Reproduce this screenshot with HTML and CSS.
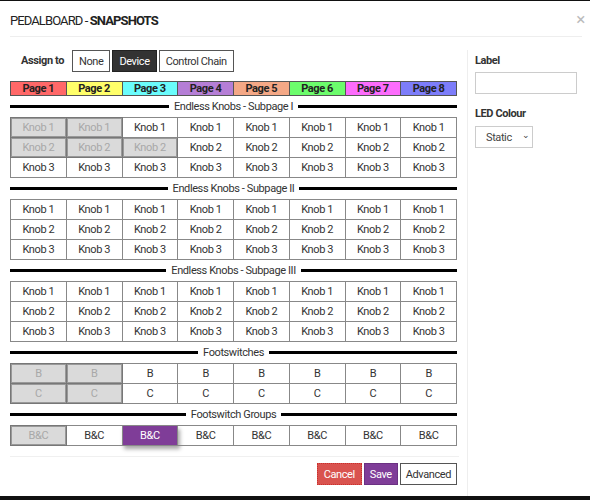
FILE: index.html
```html
<!DOCTYPE html>
<html>
<head>
    <meta charset="utf-8" />
    <title>Pedalboard - Snapshots</title>
    <link rel="stylesheet" href="styles.css">
</head>
<body>
    <div class="modal">
        <div class="modal-head">
            <h2>PEDALBOARD - <b>SNAPSHOTS</b></h2>
            <span class="close">&times;</span>
        </div>
        <div class="modal-body">
            <div class="main">
                <div class="assign">
                    <span class="assign-label">Assign to</span>
                    <button class="btn">None</button>
                    <button class="btn dark">Device</button>
                    <button class="btn">Control Chain</button>
                </div>

                <ul class="pages">
                    <li class="p1">Page 1</li>
                    <li class="p2">Page 2</li>
                    <li class="p3">Page 3</li>
                    <li class="p4">Page 4</li>
                    <li class="p5">Page 5</li>
                    <li class="p6">Page 6</li>
                    <li class="p7">Page 7</li>
                    <li class="p8">Page 8</li>
                </ul>

                <div class="section"><span>Endless Knobs - Subpage I</span></div>
                <table class="grid">
                    <tr><td class="off">Knob 1</td><td class="off">Knob 1</td><td>Knob 1</td><td>Knob 1</td><td>Knob 1</td><td>Knob 1</td><td>Knob 1</td><td>Knob 1</td></tr>
                    <tr><td class="off">Knob 2</td><td class="off">Knob 2</td><td class="off">Knob 2</td><td>Knob 2</td><td>Knob 2</td><td>Knob 2</td><td>Knob 2</td><td>Knob 2</td></tr>
                    <tr><td>Knob 3</td><td>Knob 3</td><td>Knob 3</td><td>Knob 3</td><td>Knob 3</td><td>Knob 3</td><td>Knob 3</td><td>Knob 3</td></tr>
                </table>

                <div class="section"><span>Endless Knobs - Subpage II</span></div>
                <table class="grid">
                    <tr><td>Knob 1</td><td>Knob 1</td><td>Knob 1</td><td>Knob 1</td><td>Knob 1</td><td>Knob 1</td><td>Knob 1</td><td>Knob 1</td></tr>
                    <tr><td>Knob 2</td><td>Knob 2</td><td>Knob 2</td><td>Knob 2</td><td>Knob 2</td><td>Knob 2</td><td>Knob 2</td><td>Knob 2</td></tr>
                    <tr><td>Knob 3</td><td>Knob 3</td><td>Knob 3</td><td>Knob 3</td><td>Knob 3</td><td>Knob 3</td><td>Knob 3</td><td>Knob 3</td></tr>
                </table>

                <div class="section"><span>Endless Knobs - Subpage III</span></div>
                <table class="grid">
                    <tr><td>Knob 1</td><td>Knob 1</td><td>Knob 1</td><td>Knob 1</td><td>Knob 1</td><td>Knob 1</td><td>Knob 1</td><td>Knob 1</td></tr>
                    <tr><td>Knob 2</td><td>Knob 2</td><td>Knob 2</td><td>Knob 2</td><td>Knob 2</td><td>Knob 2</td><td>Knob 2</td><td>Knob 2</td></tr>
                    <tr><td>Knob 3</td><td>Knob 3</td><td>Knob 3</td><td>Knob 3</td><td>Knob 3</td><td>Knob 3</td><td>Knob 3</td><td>Knob 3</td></tr>
                </table>

                <div class="section"><span>Footswitches</span></div>
                <table class="grid">
                    <tr><td class="off">B</td><td class="off">B</td><td>B</td><td>B</td><td>B</td><td>B</td><td>B</td><td>B</td></tr>
                    <tr><td class="off">C</td><td class="off">C</td><td>C</td><td>C</td><td>C</td><td>C</td><td>C</td><td>C</td></tr>
                </table>

                <div class="section"><span>Footswitch Groups</span></div>
                <table class="grid">
                    <tr><td class="off">B&amp;C</td><td>B&amp;C</td><td class="on">B&amp;C</td><td>B&amp;C</td><td>B&amp;C</td><td>B&amp;C</td><td>B&amp;C</td><td>B&amp;C</td></tr>
                </table>

                <div class="footer">
                    <button class="btn red">Cancel</button>
                    <button class="btn purple">Save</button>
                    <button class="btn">Advanced</button>
                </div>
            </div>

            <div class="side">
                <label class="field-label">Label</label>
                <input type="text" class="text-input">
                <label class="field-label led">LED Colour</label>
                <div class="select">Static <span class="caret">&#8964;</span></div>
            </div>
        </div>
    </div>
</body>
</html>
```

FILE: styles.css
```css
html, body {
    margin: 0;
    padding: 0;
    background-color: #111;
}

body {
    font-family: Roboto, "Liberation Sans", sans-serif;
    color: #333;
    font-size: 11px;
    letter-spacing: -0.4px;
}

.modal {
    background-color: #fff;
    margin-top: 1px;
    height: 495px;
    overflow: hidden;
}

.modal-head {
    height: 35px;
    margin: 0 8px 0 10px;
    border-bottom: 1px solid #eee;
    display: flex;
    align-items: center;
    justify-content: space-between;
}

    .modal-head h2 {
        margin: 0;
        font-size: 13px;
        font-weight: 400;
        color: #222;
        letter-spacing: -0.9px;
        padding-top: 3px;
    }

        .modal-head h2 b {
            font-weight: 700;
        }

    .modal-head .close {
        color: #bbb;
        font-size: 17px;
        margin-right: -3px;
        margin-top: 1px;
    }

.modal-body {
    display: flex;
}

.main {
    width: 449px;
    padding: 13px 8px 0 10px;
}

.side {
    flex: 1;
    margin-top: 13px;
    border-left: 1px solid #eee;
    padding-left: 7px;
    height: 460px;
}

.assign {
    display: flex;
    align-items: center;
    height: 22px;
    margin-bottom: 9px;
}

.assign-label {
    font-weight: 700;
    margin-left: 11px;
    width: 51px;
    font-size: 11px;
    margin-top: -2px;
}

.btn {
    font-family: Roboto, "Liberation Sans", sans-serif;
    font-size: 11px;
    letter-spacing: -0.4px;
    color: #333;
    background-color: #fff;
    border: 1px solid #555;
    height: 22px;
    padding: 0 6px;
    margin: 0 2px 0 0;
    cursor: pointer;
}

    .btn.dark {
        background-color: #333;
        color: #fff;
        border-color: #222;
    }

    .btn.red {
        background-color: #d9534f;
        border: 1px dotted #c9302c;
        color: #fff;
    }

    .btn.purple {
        background-color: #7f3d98;
        border-color: #6b3182;
        color: #fff;
    }

ul {
    list-style: none;
    margin: 0;
    padding: 0;
}

.pages {
    display: flex;
    width: 447px;
    height: 15px;
}

    .pages li {
        flex: 1;
        border: 1px solid #555;
        border-left: none;
        font-weight: 700;
        text-align: center;
        line-height: 13px;
        font-size: 11px;
        color: #222;
    }

        .pages li:first-child {
            border-left: 1px solid #555;
        }

    .pages .p1 { background-color: #ff6868; }
    .pages .p2 { background-color: #ffff6a; }
    .pages .p3 { background-color: #6afcfc; }
    .pages .p4 { background-color: #b57ed6; }
    .pages .p5 { background-color: #f4a886; }
    .pages .p6 { background-color: #6cfc6c; }
    .pages .p7 { background-color: #fc6cfc; }
    .pages .p8 { background-color: #7d7dfa; }

.section {
    width: 447px;
    height: 21px;
    display: flex;
    align-items: center;
    font-size: 11px;
    color: #333;
}

    .section::before,
    .section::after {
        content: "";
        flex: 1;
        height: 3px;
        background-color: #000;
    }

    .section span {
        padding: 0 5px;
    }

.grid {
    width: 447px;
    border-collapse: collapse;
    table-layout: fixed;
}

    .grid td {
        border: 1px solid #888;
        height: 19px;
        padding: 0;
        text-align: center;
        font-size: 11px;
        color: #333;
    }

        .grid td.off {
            background-color: #dadada;
            color: #a8a8a8;
            border-color: #777;
            box-shadow: inset 0 0 0 1px #999;
        }

        .grid td.on {
            background-color: #7f3d98;
            color: #fff;
            box-shadow: 2px 3px 4px rgba(0, 0, 0, 0.35);
        }

.footer {
    margin-top: 10px;
    border-top: 1px solid #f0f0f0;
    padding-top: 6px;
    display: flex;
    justify-content: flex-end;
    width: 449px;
}

    .footer .btn {
        margin: 0 0 0 2px;
        padding: 0 5px;
    }

        .footer .btn.red {
            padding: 0 6px;
        }

        .footer .btn:last-child {
            margin-right: 2px;
        }

.field-label {
    display: block;
    font-weight: 700;
    font-size: 11px;
    margin-top: 4px;
    height: 14px;
}

    .field-label.led {
        margin-top: 13px;
    }

.text-input {
    display: block;
    box-sizing: border-box;
    width: 102px;
    height: 22px;
    border: 1px solid #ccc;
    margin-top: 4px;
}

.select {
    box-sizing: border-box;
    width: 58px;
    height: 22px;
    border: 1px solid #ccc;
    margin-top: 5px;
    display: flex;
    align-items: center;
    padding-left: 10px;
    font-size: 11px;
    color: #444;
}

    .select .caret {
        font-size: 9px;
        margin-left: 10px;
        margin-top: -4px;
    }
```
